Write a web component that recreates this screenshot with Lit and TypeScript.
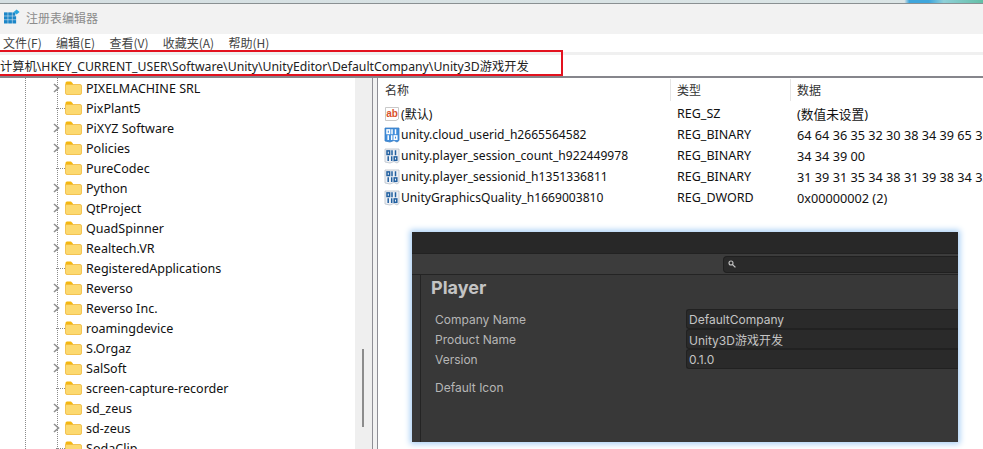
import { LitElement, css, html, svg } from "lit";
import { customElement } from "lit/decorators.js";

type TreeRow = { name: string; arrow: boolean };

const TREE: TreeRow[] = [
  { name: "PIXELMACHINE SRL", arrow: true },
  { name: "PixPlant5", arrow: false },
  { name: "PiXYZ Software", arrow: true },
  { name: "Policies", arrow: true },
  { name: "PureCodec", arrow: false },
  { name: "Python", arrow: true },
  { name: "QtProject", arrow: true },
  { name: "QuadSpinner", arrow: true },
  { name: "Realtech.VR", arrow: true },
  { name: "RegisteredApplications", arrow: false },
  { name: "Reverso", arrow: true },
  { name: "Reverso Inc.", arrow: true },
  { name: "roamingdevice", arrow: false },
  { name: "S.Orgaz", arrow: true },
  { name: "SalSoft", arrow: true },
  { name: "screen-capture-recorder", arrow: false },
  { name: "sd_zeus", arrow: true },
  { name: "sd-zeus", arrow: true },
  { name: "SodaClip", arrow: false },
];

const VALUES = [
  { name: "(默认)", type: "REG_SZ", data: "(数值未设置)", str: true, on: false },
  { name: "unity.cloud_userid_h2665564582", type: "REG_BINARY", data: "64 64 36 35 32 30 38 34 39 65 36 34 36 33", str: false, on: true },
  { name: "unity.player_session_count_h922449978", type: "REG_BINARY", data: "34 34 39 00", str: false, on: false },
  { name: "unity.player_sessionid_h1351336811", type: "REG_BINARY", data: "31 39 31 35 34 38 31 39 38 34 33 36 33 38", str: false, on: false },
  { name: "UnityGraphicsQuality_h1669003810", type: "REG_DWORD", data: "0x00000002 (2)", str: false, on: false },
];

const folderIcon = svg`<svg class="folder" width="17" height="14" viewBox="0 0 17 14">
  <path d="M0.5 2 Q0.5 0.5 2 0.5 H6 L8 2.5 V4.5 H0.5 Z" fill="#f5b70f" />
  <path d="M0.5 3.5 H15 Q16.5 3.5 16.5 5 V12 Q16.5 13.5 15 13.5 H2 Q0.5 13.5 0.5 12 Z" fill="#fcd96f" stroke="#f0b93a" stroke-width="0.8" />
</svg>`;

const chevron = svg`<svg class="chevron" width="7" height="10" viewBox="0 0 7 10"><path d="M1 1 L5.5 5 L1 9" fill="none" stroke="#8f8f8f" stroke-width="1.6" /></svg>`;

const stringIcon = svg`<svg class="val-icon" width="16" height="16" viewBox="0 0 16 16">
  <path d="M1.5 1.5 H14.5 V13 L12 14.5 H1.5 Z" fill="#fff" stroke="#c9c9c9" />
  <text x="2.2" y="10.6" font-family="Liberation Sans, sans-serif" font-size="10" font-weight="700" fill="#d9512c">ab</text>
</svg>`;

const binaryIcon = (on: boolean) => svg`<svg class="val-icon" width="16" height="16" viewBox="0 0 16 16">
  <path d="M1 1 H15 V13.5 L13 15 L10 13.5 L6 15 L1 14 Z" fill="${on ? "#3f8ddb" : "#eef1f6"}" stroke="${on ? "#3b7fc4" : "#b9c0c9"}" stroke-width="0.8" />
  <g fill="none" stroke="${on ? "#fff" : "#215f9f"}" stroke-width="1.5">
    <rect x="3" y="2.9" width="2.6" height="3.6" />
    <path d="M8 2.2 V7.2 M11.5 2.2 V7.2" />
    <path d="M4.2 8.2 V13 M7.7 8.2 V13" />
    <rect x="10.2" y="8.9" width="2.6" height="3.4" />
  </g>
</svg>`;

@customElement("app-root")
export class AppRoot extends LitElement {
  static styles = css`
    :host {
      display: block;
      position: relative;
      width: 983px;
      height: 449px;
      overflow: hidden;
      background: #fff;
      color: #111;
      font-family: "Noto Sans CJK SC", "Noto Sans", sans-serif;
      font-size: 12px;
    }

    .wallpaper {
      height: 3px;
      background: linear-gradient(90deg, #d5dfe2 0%, #dbe5e6 92%, #3fa6dc 92.5%, #3fa6dc 94.5%, #8fd0d8 96%, #63bfa6 100%);
      border-bottom: 1px solid #8a9092;
    }

    .titlebar {
      display: flex;
      align-items: center;
      gap: 6px;
      height: 26px;
      padding: 0 0 4px 4px;
      background: #f2f2f2;
      color: #8c8c8c;
      font-size: 12px;
    }

    .menu {
      display: flex;
      gap: 14.25px;
      height: 17px;
      padding-left: 3px;
      align-items: center;
      background: #fff;
      color: #444;
      font-size: 12px;
    }

    .address {
      display: flex;
      align-items: center;
      height: 21px;
      margin-top: 1px;
      border-top: 3px solid #f0f0f0;
      background: #fff;
      font-family: "Noto Sans", "Noto Sans CJK SC", sans-serif;
      font-size: 12.25px;
      color: #222;
      white-space: nowrap;
    }

    .red-box {
      position: absolute;
      left: -3px;
      top: 50px;
      width: 562px;
      height: 22px;
      border: 2px solid #e3121f;
      pointer-events: none;
    }

    .split {
      display: flex;
      height: 373px;
      border-top: 2px solid #86868c;
    }

    .tree {
      position: relative;
      width: 355px;
      flex: none;
      overflow: hidden;
    }

    .rows {
      display: flex;
      flex-direction: column;
    }

    .guide {
      position: absolute;
      top: 0;
      bottom: 0;
      border-left: 1px dotted #8a8a8a;
    }

    .tree-row {
      display: flex;
      align-items: center;
      height: 20px;
      padding-left: 53px;
      flex: none;
      white-space: nowrap;
      font-family: "Noto Sans", sans-serif;
      font-size: 12.55px;
    }

    .twist {
      position: relative;
      display: flex;
      align-items: center;
      width: 12px;
      height: 100%;
      flex: none;
    }

    .leaf {
      width: 9px;
      margin-left: 3px;
      border-top: 1px dotted #8a8a8a;
    }

    .folder {
      flex: none;
      margin-right: 4px;
    }

    .scroll {
      position: relative;
      width: 17px;
      flex: none;
      background: #efefef;
    }

    .thumb {
      position: absolute;
      left: 7px;
      top: 271px;
      width: 2px;
      height: 78px;
      background: #8c8c8c;
    }

    .sash {
      width: 4px;
      flex: none;
      background: #f2f2f2;
      border-left: 1px solid #8f8f96;
      border-right: 1px solid #8f8f96;
    }

    .list {
      flex: 1;
      min-width: 0;
      overflow: hidden;
      white-space: nowrap;
      font-family: "Noto Sans", "Noto Sans CJK SC", sans-serif;
      font-size: 12.5px;
    }

    .grid-row {
      display: grid;
      grid-template-columns: 293px 120px 1fr;
      align-items: center;
    }

    .head {
      height: 22px;
      margin: 1px 0 2px;
      color: #333;
      font-size: 12px;
    }

    .head div {
      display: flex;
      align-items: center;
      height: 100%;
      padding-left: 7px;
      border-right: 1px solid #e5e5e5;
    }

    .head div:last-child {
      border-right: none;
    }

    .head div + div {
      padding-left: 6px;
    }

    .value {
      height: 21px;
    }

    .value .name {
      display: flex;
      align-items: center;
      gap: 1px;
      padding-left: 6px;
      font-size: 12.1px;
    }

    .value .type {
      padding-left: 6px;
    }

    .value .data {
      padding-left: 6px;
      font-size: 12.7px;
    }

    .unity {
      position: absolute;
      left: 412px;
      top: 232px;
      width: 546px;
      height: 210px;
      display: flex;
      flex-direction: column;
      background: #383838;
      box-shadow: 0 0 6px 2px #a9cff5;
      color: #b6b6b6;
      font-family: Inter, "Noto Sans CJK SC", sans-serif;
      font-size: 12px;
    }

    .unity-top {
      height: 21px;
      flex: none;
      background: #282828;
      border-bottom: 1px solid #222;
    }

    .unity-bar {
      display: flex;
      align-items: center;
      height: 20px;
      flex: none;
      padding-left: 311px;
      background: #3c3c3c;
      border-bottom: 1px solid #242424;
    }

    .search {
      display: flex;
      align-items: center;
      flex: 1;
      height: 15px;
      padding-left: 4px;
      background: #2a2a2a;
      border: 1px solid #202020;
      border-right: none;
      border-radius: 4px 0 0 4px;
    }

    .unity-body {
      display: flex;
      flex: 1;
      min-height: 0;
    }

    .side {
      width: 8px;
      flex: none;
      border-right: 1px solid #242424;
    }

    .content {
      flex: 1;
      min-width: 0;
    }

    .player {
      height: 22px;
      margin: 2px 0 10px 10px;
      color: #c4c4c4;
      font-size: 18px;
      font-weight: 700;
      line-height: 22px;
    }

    .prop {
      display: grid;
      grid-template-columns: 265px 1fr;
      height: 20px;
      align-items: center;
    }

    .prop label {
      padding-left: 14px;
    }

    .input {
      display: flex;
      align-items: center;
      height: 18px;
      padding-left: 2px;
      background: #2a2a2a;
      border: 1px solid #212121;
      border-right: none;
      border-radius: 3px 0 0 3px;
      color: #c4c4c4;
    }

    .icon-label {
      margin-top: 9px;
      padding-left: 14px;
      line-height: 20px;
    }
  `;

  render() {
    return html`
      <div class="wallpaper"></div>
      <div class="titlebar">
        <svg width="16" height="16" viewBox="0 0 19 19">
          <g fill="#1c86c8">
            <rect x="0" y="4" width="4.4" height="4" /><rect x="5" y="4" width="4.4" height="4" /><rect x="10" y="4" width="3.4" height="4" />
            <rect x="0" y="8.6" width="4.4" height="4" /><rect x="5" y="8.6" width="4.4" height="4" /><rect x="10" y="8.6" width="4.4" height="4" />
            <rect x="0" y="13.2" width="4.4" height="4" /><rect x="5" y="13.2" width="4.4" height="4" /><rect x="10" y="13.2" width="4.4" height="4" />
          </g>
          <path d="M15 0.5 L18.5 3.5 L15 6.5 L11.5 3.5 Z" fill="#2aa5dc" />
        </svg>
        <span>注册表编辑器</span>
      </div>
      <div class="menu">
        <span>文件(F)</span><span>编辑(E)</span><span>查看(V)</span><span>收藏夹(A)</span><span>帮助(H)</span>
      </div>
      <div class="address"><span>计算机\\HKEY_CURRENT_USER\\Software\\Unity\\UnityEditor\\DefaultCompany\\Unity3D游戏开发</span></div>
      <div class="split">
        <div class="tree">
          <span class="guide" style="left:25px"></span>
          <span class="guide" style="left:57px"></span>
          <div class="rows">
            ${TREE.map(
              (r) => html`<div class="tree-row">
                <span class="twist">${r.arrow ? chevron : html`<span class="leaf"></span>`}</span>
                ${folderIcon}<span>${r.name}</span>
              </div>`
            )}
          </div>
        </div>
        <div class="scroll"><div class="thumb"></div></div>
        <div class="sash"></div>
        <div class="list">
          <div class="grid-row head"><div>名称</div><div>类型</div><div>数据</div></div>
          ${VALUES.map(
            (v) => html`<div class="grid-row value">
              <div class="name">${v.str ? stringIcon : binaryIcon(v.on)}<span>${v.name}</span></div>
              <div class="type">${v.type}</div>
              <div class="data">${v.data}</div>
            </div>`
          )}
        </div>
      </div>
      <div class="red-box"></div>
      <div class="unity">
        <div class="unity-top"></div>
        <div class="unity-bar">
          <div class="search">
            <svg width="8" height="8" viewBox="0 0 8 8"><circle cx="3" cy="3" r="2" fill="none" stroke="#c4c4c4" stroke-width="1.1" /><path d="M4.6 4.6 L7.4 7.4" stroke="#c4c4c4" stroke-width="1.3" /></svg>
          </div>
        </div>
        <div class="unity-body">
          <div class="side"></div>
          <div class="content">
            <div class="player">Player</div>
            <div class="prop"><label>Company Name</label><div class="input">DefaultCompany</div></div>
            <div class="prop"><label>Product Name</label><div class="input">Unity3D游戏开发</div></div>
            <div class="prop"><label>Version</label><div class="input">0.1.0</div></div>
            <div class="icon-label">Default Icon</div>
          </div>
        </div>
      </div>
    `;
  }
}

declare global {
  interface HTMLElementTagNameMap {
    "app-root": AppRoot;
  }
}
